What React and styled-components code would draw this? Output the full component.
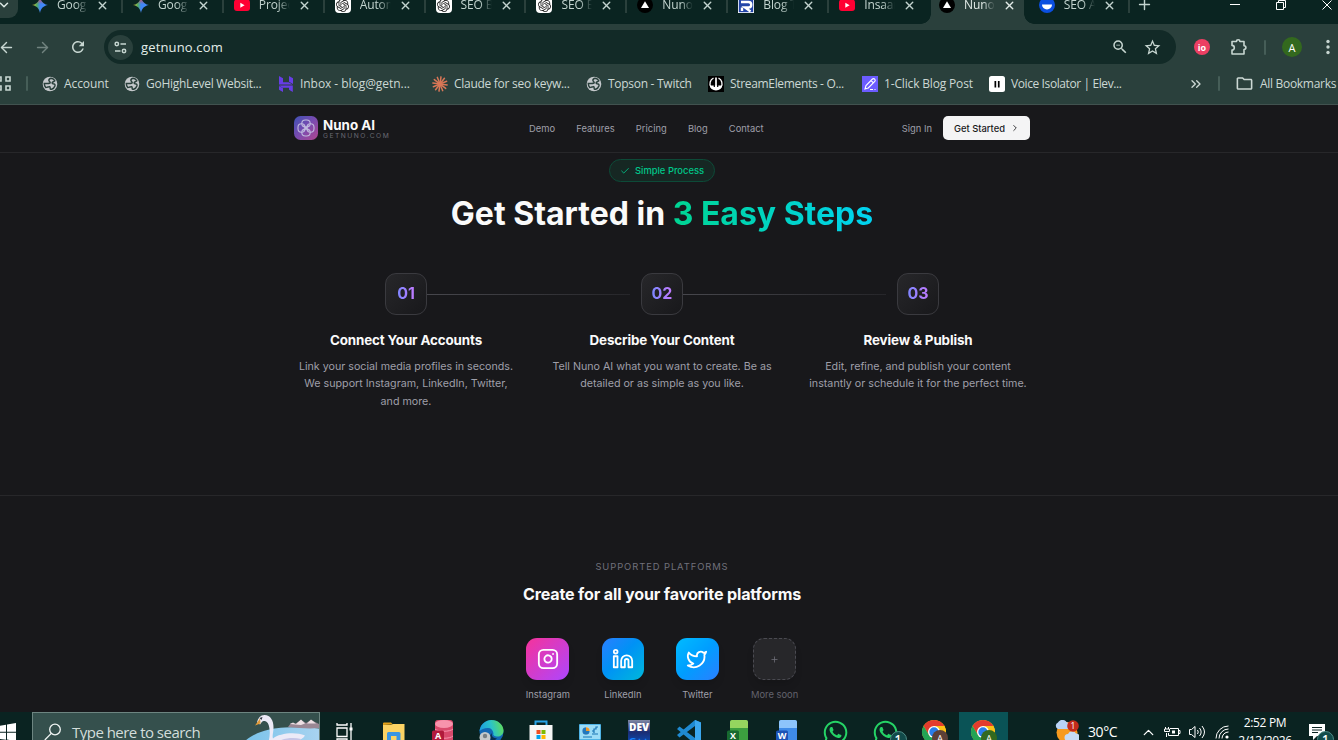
import React from 'react';
import styled, { createGlobalStyle, css } from 'styled-components';
import {
  ArrowLeft, ArrowRight, Check, ChevronDown, ChevronRight, ChevronUp, ChevronsRight,
  Instagram, Linkedin, Plus, Twitter, X
} from 'lucide-react';
import { MdOutlineFolder, MdOutlineZoomOut, MdRefresh, MdStarOutline } from 'react-icons/md';
import { SiOpenai } from 'react-icons/si';
import { FaWhatsapp } from 'react-icons/fa';

const GlobalStyle = createGlobalStyle`
  * {
    box-sizing: border-box;
  }

  body {
    margin: 0;
    background: #18181b;
    overflow: hidden;
  }

  svg {
    display: block;
    flex-shrink: 0;
  }
`;

const uiFont = "'Open Sans', 'Noto Sans', sans-serif";

const Screen = styled.div`
  display: flex;
  flex-direction: column;
  width: 1338px;
  height: 740px;
  overflow: hidden;
  font-family: Inter, sans-serif;
`;

/* ---------- browser ---------- */

const TabStrip = styled.div`
  display: flex;
  height: 24px;
  flex-shrink: 0;
  background: #0a2421;
  font-family: ${uiFont};
`;

const TabSearch = styled.div`
  flex: 0 0 18px;
  height: 18px;
  margin-right: 4px;
  border-radius: 0 0 9px 0;
  background: #2a403c;
  color: #dfe9e6;

  svg {
    margin: -2px 0 0 -3px;
  }
`;

const Tab = styled.div`
  position: relative;
  display: flex;
  align-items: center;
  flex: 0 0 100.9px;
  height: 24px;
  padding: 0 0 14px 10px;
  color: #c3d4cf;

  ${p => p.$active && css`
    flex-basis: 93px;
    margin: 0 4.7px 0 1px;
    padding-left: 8px;
    background: #2a403c;
    color: #e3ebe8;

    &::before,
    &::after {
      content: '';
      position: absolute;
      bottom: 0;
      width: 10px;
      height: 10px;
    }

    &::before {
      left: -10px;
      background: radial-gradient(circle at 0 0, transparent 9.5px, #2a403c 10px);
    }

    &::after {
      right: -10px;
      background: radial-gradient(circle at 100% 0, transparent 9.5px, #2a403c 10px);
    }
  `}
`;

const TabLabel = styled.span`
  width: 31px;
  margin: 0 8px 0 9px;
  overflow: hidden;
  white-space: nowrap;
  font-size: 12px;
  line-height: 18px;
  letter-spacing: -0.1px;
  mask-image: linear-gradient(90deg, #000 60%, transparent 100%);
`;

const TabDivider = styled.span`
  width: 2px;
  height: 16px;
  margin-left: auto;
  background: ${p => (p.$hidden ? 'transparent' : '#2a403c')};
`;

const NewTab = styled.div`
  margin: -4px 0 0 6px;
  color: #c3d4cf;
`;

const WindowButtons = styled.div`
  display: flex;
  align-items: center;
  gap: 34px;
  height: 10px;
  margin-left: auto;
  padding-right: 5px;
`;

const Toolbar = styled.div`
  display: flex;
  align-items: center;
  height: 46px;
  flex-shrink: 0;
  background: #2a403c;
  color: #c7d6d1;
  font-family: ${uiFont};
`;

const ToolSlot = styled.div`
  display: flex;
  align-items: center;
  justify-content: center;
  flex: 0 0 ${p => p.$width || 36}px;
  margin-left: ${p => p.$shift || 0}px;
  opacity: ${p => (p.$disabled ? 0.45 : 1)};
`;

const AddressBar = styled.div`
  display: flex;
  align-items: center;
  flex: 0 0 1072px;
  height: 34px;
  margin-left: 8px;
  padding: 0 8px 0 4px;
  border-radius: 17px;
  background: #122a27;
`;

const SiteInfo = styled.div`
  display: grid;
  place-items: center;
  width: 25px;
  height: 25px;
  border-radius: 50%;
  background: #2a403c;
`;

const Url = styled.span`
  flex: 1;
  margin-left: 8px;
  color: #e4eeea;
  font-size: 13px;
  letter-spacing: 0.15px;
`;

const Badge = styled.span`
  display: grid;
  place-items: center;
  width: ${p => p.$size}px;
  height: ${p => p.$size}px;
  border-radius: 50%;
  background: ${p => p.$color};
  color: #fff;
  font-size: ${p => p.$font}px;
  font-weight: ${p => p.$weight || 400};
  line-height: 1;
`;

const VerticalRule = styled.span`
  width: 2px;
  height: 15px;
  border-radius: 1px;
  background: #465e58;
`;

const BookmarksBar = styled.div`
  display: flex;
  align-items: center;
  height: 35px;
  flex-shrink: 0;
  padding-bottom: 7px;
  border-bottom: 1px solid #41524f;
  background: #2a403c;
  color: #ccd8d4;
  font-family: ${uiFont};
`;

const AppsButton = styled.div`
  width: 26px;
  color: #c7d6d1;

  svg {
    margin-left: -4px;
  }
`;

const BookmarkList = styled.div`
  display: flex;
  margin-left: 14px;
`;

const Bookmark = styled.div`
  display: flex;
  align-items: center;
  gap: 6px;
  width: ${p => p.$width}px;
  font-size: 12px;
  letter-spacing: ${p => p.$tracking ?? -0.28}px;
  white-space: nowrap;
`;

const AllBookmarks = styled(Bookmark)`
  margin-left: 15px;
`;

/* ---------- site ---------- */

const Page = styled.main`
  width: 1338px;
  height: 607px;
  flex-shrink: 0;
  background: #18181b;
  color: #fafafa;
`;

const Nav = styled.nav`
  display: flex;
  align-items: center;
  height: 48px;
  padding: 0 308px 1px 294px;
  border-bottom: 1px solid #27272a;
  font-size: 9.38px;
  color: #9f9fa9;
`;

const Brand = styled.div`
  display: flex;
  align-items: center;
  gap: 5px;
  width: 235px;
`;

const BrandName = styled.div`
  padding-top: 2px;
  color: #fafafa;
  font-size: 13.4px;
  font-weight: 700;
  line-height: 14px;
`;

const BrandHost = styled.div`
  margin-top: 1px;
  color: #6a6a74;
  font-size: 6.7px;
  line-height: 7px;
  letter-spacing: 1.48px;
`;

const NavLinks = styled.div`
  display: flex;
  flex: 1;
  gap: 21.2px;
`;

const GetStarted = styled.button`
  display: flex;
  align-items: center;
  gap: 5px;
  width: 87px;
  height: 24px;
  margin-left: 11px;
  padding: 0 0 0 11px;
  border: 0;
  border-radius: 5px;
  background: #f4f4f5;
  color: #18181b;
  font: 500 9.4px Inter, sans-serif;
`;

const StepsSection = styled.section`
  display: flex;
  flex-direction: column;
  align-items: center;
  height: 343px;
  padding: 6px 14px 0 0;
  border-bottom: 1px solid #27272a;
`;

const Pill = styled.div`
  display: flex;
  align-items: center;
  gap: 5px;
  height: 23px;
  padding: 0 10px;
  border: 1px solid #0d4a38;
  border-radius: 12px;
  background: #162723;
  color: #00c78a;
  font-size: 9.4px;
  font-weight: 500;
`;

const Heading = styled.h1`
  margin: 12px 0 0;
  font-size: 32px;
  font-weight: 700;
  line-height: 40px;
  white-space: nowrap;

  span {
    background: linear-gradient(90deg, #00d492, #00d3f2);
    background-clip: text;
    color: transparent;
  }
`;

const StepGrid = styled.div`
  display: grid;
  grid-template-columns: repeat(3, 224px);
  gap: 32px;
  margin-top: 39px;
`;

const Step = styled.article`
  position: relative;
  display: flex;
  flex-direction: column;
  align-items: center;
  text-align: center;
`;

const Connector = styled.span`
  position: absolute;
  top: 21px;
  left: 133px;
  width: 203px;
  height: 1px;
  background: linear-gradient(90deg, #47474d, #26262a);
`;

const StepNumber = styled.div`
  display: grid;
  place-items: center;
  width: 42px;
  height: 42px;
  border: 1px solid #3a3a3f;
  border-radius: 11px;
  background: linear-gradient(135deg, #27272a, #18181b);
  font-size: 16px;
  font-weight: 700;

  span {
    margin-top: -2px;
    background: linear-gradient(90deg, #7c86ff, #c27aff);
    background-clip: text;
    color: transparent;
  }
`;

const StepTitle = styled.h3`
  margin: 16px 0 8px;
  font-size: 13.4px;
  font-weight: 700;
  line-height: 19px;
  letter-spacing: -0.01em;
`;

const StepText = styled.p`
  margin: 0;
  color: #9f9fa9;
  font-size: 10.7px;
  line-height: 17.4px;
  white-space: pre-line;
`;

const PlatformSection = styled.section`
  display: flex;
  flex-direction: column;
  align-items: center;
  padding: 64px 14px 0 0;
`;

const Eyebrow = styled.p`
  margin: 0;
  color: #71717b;
  font-size: 9.4px;
  line-height: 13px;
  letter-spacing: 0.93px;
`;

const PlatformHeading = styled.h2`
  margin: 11px 0 0;
  font-size: 16.1px;
  font-weight: 700;
  line-height: 21px;
  letter-spacing: -0.01em;
`;

const PlatformList = styled.div`
  display: flex;
  gap: 32px;
  margin-top: 33px;
`;

const Platform = styled.div`
  display: flex;
  flex-direction: column;
  align-items: center;
  gap: 8px;
  color: ${p => (p.$muted ? '#62626c' : '#9f9fa9')};
  font-size: 9.4px;
  line-height: 13px;
`;

const PlatformIcon = styled.div`
  display: grid;
  place-items: center;
  width: ${p => p.$width || 43}px;
  height: 42px;
  border-radius: 11px;
  background: ${p => p.$fill};
  border: ${p => (p.$dashed ? '1px dashed #4a4a51' : '0')};
  color: ${p => (p.$dashed ? '#71717b' : '#fff')};
  box-shadow: 0 6px 10px -3px rgba(0, 0, 0, 0.18);
`;

/* ---------- taskbar ---------- */

const Taskbar = styled.footer`
  display: flex;
  align-items: center;
  height: 40px;
  flex-shrink: 0;
  background: #0a2321;
  color: #fff;
  font-family: ${uiFont};
`;

const StartButton = styled.div`
  width: 32px;

  svg {
    margin-left: -2px;
  }
`;

const SearchBox = styled.div`
  display: flex;
  align-items: center;
  width: 288px;
  height: 40px;
  padding-left: 11px;
  border: 1px solid #6d8581;
  background: #35504d;
  color: #d3dddb;
  font-size: 15px;
  letter-spacing: -0.52px;

  span {
    margin-left: 10px;
    white-space: nowrap;
  }

  svg:last-child {
    margin-left: auto;
  }
`;

const TaskItem = styled.div`
  position: relative;
  display: grid;
  place-items: center;
  flex: 0 0 49.15px;
  height: 40px;
  background: ${p => (p.$active ? '#0a5356' : 'transparent')};
`;

const CountBadge = styled.span`
  position: absolute;
  left: ${p => p.$left}px;
  top: 19px;
  display: grid;
  place-items: center;
  width: 17px;
  height: 17px;
  border: 1px solid #4f8b86;
  border-radius: 50%;
  background: #124b4a;
  font-size: 12px;
  font-weight: 600;
  line-height: 1;
`;

const Tray = styled.div`
  display: flex;
  align-items: center;
  margin-left: auto;
`;

const Temperature = styled.span`
  width: 48px;
  margin: -1px 0 0 9px;
  font-size: 14px;
  letter-spacing: -0.4px;
`;

const TraySlot = styled.div`
  display: grid;
  place-items: center;
  width: ${p => p.$width || 25}px;
`;

const Clock = styled.div`
  width: 62px;
  height: 40px;
  padding-top: 2px;
  font-size: 12px;
  line-height: 18px;
  letter-spacing: -0.35px;
  text-align: center;
`;

const Notifications = styled(TaskItem)`
  flex-basis: 42px;
`;

/* ---------- drawings ---------- */

const starPath = 'M8 0c.7 4.500 3.500 7.300 8 8-4.500.7-7.300 3.500-8 8-.7-4.500-3.500-7.300-8-8 4.500-.7 7.300-3.500 8-8z';

const Gemini = () => (
  <svg width="16" height="16" viewBox="0 0 16 16">
    <defs>
      <linearGradient id="gemA" x1="0" y1="0" x2="1" y2="0">
        <stop offset="0" stopColor="#f6c12c" />
        <stop offset="0.3" stopColor="#4fae62" />
        <stop offset="0.5" stopColor="#4285f4" />
        <stop offset="1" stopColor="#3f8cff" />
      </linearGradient>
      <linearGradient id="gemB" x1="0" y1="0" x2="0" y2="1">
        <stop offset="0" stopColor="#ea4335" />
        <stop offset="0.45" stopColor="#ea4335" stopOpacity="0" />
      </linearGradient>
    </defs>
    <path fill="url(#gemA)" d={starPath} />
    <path fill="url(#gemB)" d={starPath} />
  </svg>
);

const YouTube = () => (
  <svg width="16" height="16" viewBox="0 0 16 16">
    <rect y="2.500" width="16" height="11.500" rx="3" fill="#ff0033" />
    <path d="M6.300 5.700v5l4.300-2.500z" fill="#fff" />
  </svg>
);

const GptTile = styled.div`
  display: grid;
  place-items: center;
  width: 16px;
  height: 16px;
  border-radius: 4px;
  background: #fff;
  color: #222;
`;

const ChatGpt = () => (
  <GptTile><SiOpenai size={13} /></GptTile>
);

const NunoFavicon = () => (
  <svg width="16" height="16" viewBox="0 0 16 16">
    <circle cx="8" cy="8" r="8" fill="#000" />
    <path d="M8 4.200l4 6.800H4z" fill="#fff" />
  </svg>
);

const BlogFavicon = () => (
  <svg width="16" height="16" viewBox="0 0 16 16">
    <rect width="16" height="16" fill="#fff" />
    <rect x=".8" y=".8" width="14.400" height="14.400" fill="#2345a8" />
    <path d="M3 5h7.500a2.600 2.600 0 0 1 0 5.500H7l5.500 4M4 14v-3.500" fill="none" stroke="#fff" strokeWidth="2.400" />
  </svg>
);

const SeoFavicon = () => (
  <svg width="16" height="16" viewBox="0 0 16 16">
    <circle cx="8" cy="8" r="8" fill="#0b4fe0" />
    <path d="M3 7.500h10a5 5 0 0 1-10 0z" fill="#fff" />
  </svg>
);

const Hostinger = () => (
  <svg width="16" height="16" viewBox="0 0 16 16" fill="#673de6">
    <path d="M1 0l4 2.300v3.900h5.600l4 2.300H1zM11 0l4 2.300v5.700l-4-2.300zM1 9.500h13.800V16L11 13.800v-2H4.500zM1 10l4 2.200V16l-4-2.200z" />
  </svg>
);

const Claude = () => (
  <svg width="16" height="16" viewBox="0 0 16 16" stroke="#d97757" strokeWidth="1.500" strokeLinecap="round">
    {[0, 30, 60, 90, 120, 150].map(a => (
      <path key={a} d="M8 .8v14.400" transform={`rotate(${a + 8} 8 8)`} />
    ))}
  </svg>
);

const StreamElements = () => (
  <svg width="16" height="16" viewBox="0 0 16 16">
    <rect width="16" height="16" fill="#000" />
    <path d="M5.500 2.200A6 6 0 0 0 3 11M10.500 2.200A6 6 0 0 1 13 11" fill="none" stroke="#fff" strokeWidth="1.300" />
    <path d="M1.800 9.500h12.400a6.200 5 0 0 1-12.400 0z" fill="#fff" />
    <path d="M6.300 6v5M9.700 6v5" stroke="#000" strokeWidth="1.200" />
    <path d="M8 1.500v11" stroke="#fff" strokeWidth="1.700" />
  </svg>
);

const BlogPost = () => (
  <svg width="16" height="16" viewBox="0 0 16 16" fill="none" stroke="#fff" strokeWidth="1.100">
    <rect width="16" height="16" fill="#6c5cff" stroke="none" />
    <path d="M3 13l1-3.500 6.500-6.500a1.400 1.400 0 0 1 2 0l.3.300a1.400 1.400 0 0 1 0 2L6.300 12zM9 4.500l2.400 2.400M8 13.500h3M12.500 13.500h1" />
  </svg>
);

const ElevenLabs = () => (
  <svg width="16" height="16" viewBox="0 0 16 16">
    <rect width="16" height="16" rx="2.500" fill="#fff" />
    <path d="M5.500 5h1.700v6.500H5.500zM8.900 5h1.700v6.500H8.900z" fill="#000" />
  </svg>
);

const Globe = () => (
  <svg width="16" height="16" viewBox="0 0 16 16">
    <circle cx="8" cy="8" r="7.300" fill="#c4c8cb" />
    <path d="M9.500 2.300c-1.800.2-2.700 1-2.600 2.200.1 1 1.200 1 1.300 2 .1.900-1.200 1-2.700 1H2.300c0 1.800.6 3 1.500 4 1-.2 2.600-.2 3.200-1M9.500 2.300c1.500.4 2.600 1.300 3.300 2.600-.7 1-2.200.7-2.600 1.700-.3 1 .8 1.300 2 1.500.8.200.9 1 .7 1.800-.5 1.500-1.700 2.800-3.300 3.400-1 .2-1.600-.3-1.400-1.200.2-1-.2-1.400-1.200-1.600" fill="none" stroke="#2a403c" strokeWidth="1.500" />
  </svg>
);

const AppsGrid = () => (
  <svg width="15" height="15" viewBox="0 0 15 15" fill="none" stroke="currentColor" strokeWidth="1.600">
    <path d="M1 1h4v4H1zM10 1h4v4h-4zM1 10h4v4H1zM10 10h4v4h-4z" />
  </svg>
);

const Tune = () => (
  <svg width="13" height="13" viewBox="0 0 13 13" fill="none" stroke="#c7d6d1" strokeWidth="1.500">
    <circle cx="2.800" cy="3" r="1.700" />
    <path d="M6.500 3H12M1 10h5.500" />
    <circle cx="10" cy="10" r="1.700" />
  </svg>
);

const Puzzle = () => (
  <svg width="18" height="18" viewBox="0 0 18 18" fill="none" stroke="currentColor" strokeWidth="1.600" strokeLinejoin="round">
    <path d="M2 3.500h4.500a1.700 1.700 0 0 1 3.400 0H14v4.200a1.900 1.900 0 0 1 0 3.800V16H2v-4a2.300 2.300 0 0 0 0-4.600z" />
  </svg>
);

const Kebab = () => (
  <svg width="4" height="16" viewBox="0 0 4 16" fill="currentColor">
    <circle cx="2" cy="2.500" r="1.700" />
    <circle cx="2" cy="8" r="1.700" />
    <circle cx="2" cy="13.500" r="1.700" />
  </svg>
);

const Minimize = () => (
  <svg width="12" height="12" viewBox="0 0 12 12" stroke="#fff"><path d="M1 5.500h10" /></svg>
);

const Restore = () => (
  <svg width="12" height="12" viewBox="0 0 12 12" fill="none" stroke="#fff">
    <path d="M1.500 3.500h7v7h-7zM3.500 3.500v-2h7v7h-2" />
  </svg>
);

const CloseWindow = () => (
  <svg width="12" height="12" viewBox="0 0 12 12" stroke="#fff"><path d="M1.500 1.500l9 9M10.500 1.500l-9 9" /></svg>
);

const NunoLogo = () => (
  <svg width="24" height="24" viewBox="0 0 24 24">
    <defs>
      <linearGradient id="nuno" x1="0" y1="0" x2="1" y2="1">
        <stop offset="0" stopColor="#3f51b5" />
        <stop offset="0.5" stopColor="#7a4bb0" />
        <stop offset="1" stopColor="#b0458e" />
      </linearGradient>
    </defs>
    <rect width="24" height="24" rx="6.500" fill="url(#nuno)" />
    <g fill="none" stroke="#c0badf" strokeWidth="1.100">
      <rect x="7.800" y="4" width="8.400" height="7" rx="3.500" />
      <rect x="7.800" y="13" width="8.400" height="7" rx="3.500" />
      <rect x="4" y="7.800" width="7" height="8.400" rx="3.500" />
      <rect x="13" y="7.800" width="7" height="8.400" rx="3.500" />
      <path d="M9.500 9.500l5 5M14.500 9.500l-5 5" strokeWidth="1.300" />
    </g>
  </svg>
);

const WindowsLogo = () => (
  <svg width="18" height="18" viewBox="0 0 18 18" fill="#fff">
    <path d="M0 3l8-1.200v7H0zM9 1.600L18 0v8.800H9zM0 9.800h8v7L0 15.600zM9 9.800h9V18l-9-1.400z" />
  </svg>
);

const SearchGlass = () => (
  <svg width="18" height="18" viewBox="0 0 18 18" fill="none" stroke="#f1f5f4" strokeWidth="1.300">
    <circle cx="11" cy="6.500" r="5.300" />
    <path d="M7.300 10.400L.8 17" />
  </svg>
);

const Swan = () => (
  <svg width="74" height="38" viewBox="0 0 74 38">
    <defs>
      <linearGradient id="lake" x1="0" y1="0" x2="1" y2="0">
        <stop offset="0" stopColor="#79c3ea" />
        <stop offset="1" stopColor="#a8d3f0" />
      </linearGradient>
    </defs>
    <path d="M0 28C9 20 24 15 40 14.500c14-.5 26 0 34 1V38H0z" fill="url(#lake)" />
    <path d="M43 14l3-4 4 1 6-4 5 3 5-3 8 4v4c-10 1-20 0-31-1z" fill="#9a8794" />
    <path d="M45 11l3-1.500 3 1.500 5-4.500 4 4-4 1.500zM62 10.500l4-4 5 4z" fill="#eddfe4" />
    <path d="M23 38c-2-6 3-12 1.500-22C24 11 22.500 8.500 19.500 8c-3 0-3 2-4.500 3.500l-3-2C13 5 15.500 2 19.500 2c6 0 9 5.500 9 12.500 0 5-1.500 8-.5 11 6-5 22-7 32-3-2 3-4 4-7 5 2 3-1 9-5 10.500z" fill="#eceaf7" />
    <path d="M30 30c8-5 18-6 26-4-4 5-12 9-26 7z" fill="#c6c5e6" />
    <path d="M15 5.500L10 12.500l5.500-2z" fill="#e09a3a" />
    <path d="M14.500 5l3-1-1 3z" fill="#29303d" />
  </svg>
);

const TaskView = () => (
  <svg width="18" height="20" viewBox="0 0 18 20" fill="none" stroke="#fff" strokeWidth="1.300">
    <path d="M1 6h10v8.500H1zM1 1v2h10V1M1 19v-2h10v2M15 1v18" />
    <path d="M13.500 5.500h3v3h-3z" fill="#fff" stroke="none" />
  </svg>
);

const Explorer = () => (
  <svg width="22" height="22" viewBox="0 0 22 22">
    <path d="M0 4V2.500a1 1 0 0 1 1-1h7l2 2z" fill="#e3a21a" />
    <path d="M0 4h8l2-1h11.500v17H0z" fill="#fcd364" />
    <path d="M4 21v-8.500A1.500 1.500 0 0 1 5.500 11h10.500a1.500 1.500 0 0 1 1.500 1.500V21h-4v-6H8v6z" fill="#3a95e4" />
  </svg>
);

const AppTile = ({ letter, back, light, tile, round }) => (
  <svg width="24" height="24" viewBox="0 0 24 24">
    <rect x="4" y="0" width="18" height="24" rx="3" fill={back} />
    {round
      ? <ellipse cx="13" cy="4" rx="9" ry="4" fill={light} />
      : <path d="M4 2a2 2 0 0 1 2-2h14a2 2 0 0 1 2 2v6H4z" fill={light} />}
    {round && <path d="M4 9c3 3 15 3 18 0M4 16c3 3 15 3 18 0" fill="none" stroke={light} />}
    <rect x="1" y="10.500" width="12" height="12" rx="1.500" fill={tile} />
    <text x="7" y="19" textAnchor="middle" fontFamily="Open Sans, sans-serif" fontWeight="700" fontSize="9" fill="#fff">{letter}</text>
  </svg>
);

const Edge = () => (
  <svg width="25" height="24" viewBox="0 0 25 24">
    <defs>
      <linearGradient id="edge" x1="0" y1="0.5" x2="1" y2="0.3">
        <stop offset="0" stopColor="#1b9de0" />
        <stop offset="0.5" stopColor="#2bc3c8" />
        <stop offset="1" stopColor="#62dd55" />
      </linearGradient>
    </defs>
    <circle cx="12.500" cy="12" r="12" fill="#1267b4" />
    <path d="M.5 11C1.500 4 7 0 12.500 0 19 0 24.500 5 24.500 10.500c0 4-3 6-6 6-3 0-5-1.500-4-3C14 10 12 8 9 8c-4 0-7 1.500-8.500 3z" fill="url(#edge)" />
    <path d="M13 13c-1 3 1 5 5 5.500l-4 3-5-4z" fill="#0a2f4f" />
    <circle cx="6" cy="17.500" r="5.500" fill="#c4c9cc" />
    <circle cx="6" cy="16" r="2.200" fill="#787f84" />
  </svg>
);

const Store = () => (
  <svg width="24" height="24" viewBox="0 0 24 24">
    <path d="M6.500 6V1.500h11V6" fill="none" stroke="#27a3e8" strokeWidth="2" />
    <path d="M.5 5h23v17a2 2 0 0 1-2 2h-19a2 2 0 0 1-2-2z" fill="#f6f6f6" />
    <path d="M7.500 10h4v4h-4z" fill="#f25022" />
    <path d="M12.500 10h4v4h-4z" fill="#7fba00" />
    <path d="M7.500 15h4v4h-4z" fill="#00a4ef" />
    <path d="M12.500 15h4v4h-4z" fill="#ffb900" />
  </svg>
);

const ControlPanel = () => (
  <svg width="22" height="16" viewBox="0 0 22 16">
    <rect width="22" height="16" rx="1" fill="#4fb3e6" />
    <rect x="1" y="1" width="20" height="14" fill="#9bdcf7" />
    <circle cx="7" cy="7" r="3.700" fill="#f8fbfd" />
    <path d="M7 7V3.300A3.700 3.700 0 0 1 10.700 7z" fill="#f09a2c" />
    <path d="M7 7h3.700A3.700 3.700 0 1 1 7 3.300z" fill="#2178be" />
    <path d="M13 7h2V5h2V3h2M13 10h6M15 7v2M4 13h9" stroke="#1a74b4" strokeWidth="1.200" fill="none" />
  </svg>
);

const DevCpp = () => (
  <svg width="22" height="24" viewBox="0 0 22 24">
    <defs>
      <linearGradient id="dev" x1="0" y1="0" x2="0" y2="1">
        <stop offset="0" stopColor="#8088a3" />
        <stop offset="0.5" stopColor="#1b2c73" />
        <stop offset="1" stopColor="#0b4db5" />
      </linearGradient>
    </defs>
    <rect width="22" height="24" fill="url(#dev)" />
    <text x="1" y="10.800" textLength="20" lengthAdjust="spacingAndGlyphs" fontFamily="Open Sans, sans-serif" fontWeight="800" fontSize="11" fill="#fff">DEV</text>
    <text x="1" y="23.500" textLength="20" lengthAdjust="spacingAndGlyphs" fontFamily="Open Sans, sans-serif" fontWeight="700" fontSize="9" fill="#1583ff">C++</text>
  </svg>
);

const VsCode = () => (
  <svg width="24" height="24" viewBox="0 0 24 24">
    <path d="M18 0l6 2.500v19L18 24 0 9l2.500-2.500L18 18V6L2.500 17.500 0 15z" fill="#1f8ad2" />
    <path d="M18 0l6 2.500v19L18 24z" fill="#3ba7ee" />
  </svg>
);

const Chrome = ({ profile }) => (
  <svg width="24" height="24" viewBox="0 0 24 24" overflow="visible">
    <circle cx="12" cy="12" r="12" fill="#fbc116" />
    <path d="M1.600 6A12 12 0 0 1 22.400 6L12 7 7 15z" fill="#e33b2e" />
    <path d="M22.400 6H12v4l6 5-5 9A12 12 0 0 0 22.400 6z" fill="#fbc116" />
    <path d="M1.600 6A12 12 0 0 0 12 24l4-7-9-2z" fill="#23a455" />
    <circle cx="12" cy="12" r="6" fill="#fff" />
    <circle cx="12" cy="12" r="4.700" fill="#2a7de9" />
    <circle cx="18" cy="18" r="8" fill={profile} />
    <text x="18" y="21.500" textAnchor="middle" fontFamily="Open Sans, sans-serif" fontSize="9.500" fill="#fff">A</text>
  </svg>
);

const Weather = () => (
  <svg width="24" height="24" viewBox="0 0 24 24">
    <circle cx="12" cy="12.500" r="10.500" fill="#f79a1e" />
    <path d="M3 9a3.500 3.500 0 0 1 0-6.500A5 5 0 0 1 11.500 2 4 4 0 0 1 13 9z" fill="#b9d3f5" />
    <path d="M13 21a3.500 3.500 0 0 1 0-7 4.500 4.500 0 0 1 8-.5A4 4 0 0 1 23 21z" fill="#c5dbf7" />
    <circle cx="18" cy="6" r="5.800" fill="#c42b1c" />
    <text x="18" y="9" textAnchor="middle" fontFamily="Open Sans, sans-serif" fontSize="8.500" fill="#fff">1</text>
  </svg>
);

const Battery = () => (
  <svg width="17" height="12" viewBox="0 0 17 12" fill="none" stroke="#fff">
    <path d="M6 2.500h8.500v7H4.500V7M14.500 4.500h1.500v3h-1.500M2.500 7v4M1.500 1v2M4.500 1v2M.5 3h5v2.500h-5z" />
    <path d="M8 4.500h3v3H8z" fill="#fff" stroke="none" />
  </svg>
);

const Volume = () => (
  <svg width="17" height="14" viewBox="0 0 17 14" fill="none" stroke="#fff">
    <path d="M.5 4.500h2L6 1.500v11L2.500 9.500h-2zM8.500 5q1.500 2 0 4M10.500 3q3.300 4 0 8M13 1q5 6 0 12" />
  </svg>
);

const Wifi = () => (
  <svg width="14" height="14" viewBox="0 0 14 14" fill="none" stroke="#fff">
    <path d="M1 13.500A12.500 12.500 0 0 1 13.500 1M4 13.500A9.500 9.500 0 0 1 13.500 4M7 13.500A6.500 6.500 0 0 1 13.500 7" />
    <circle cx="12" cy="12" r="1.600" fill="#fff" stroke="none" />
  </svg>
);

const Message = () => (
  <svg width="16" height="16" viewBox="0 0 16 16">
    <path d="M0 0h16v12H8l-4 4v-4H0z" fill="#fff" />
    <path d="M3 3.500h10M3 6h10M3 8.500h6" stroke="#0a2321" />
  </svg>
);

/* ---------- data ---------- */

const tabs = [
  { label: 'Goog', Icon: Gemini },
  { label: 'Goog', Icon: Gemini },
  { label: 'Projec', Icon: YouTube },
  { label: 'Autom', Icon: ChatGpt },
  { label: 'SEO B', Icon: ChatGpt },
  { label: 'SEO B', Icon: ChatGpt },
  { label: 'Nuno', Icon: NunoFavicon },
  { label: 'Blog T', Icon: BlogFavicon },
  { label: 'Insaan', Icon: YouTube },
  { label: 'Nuno', Icon: NunoFavicon, active: true },
  { label: 'SEO A', Icon: SeoFavicon }
];

const bookmarks = [
  { label: 'Account', Icon: Globe, width: 82, tracking: -0.1 },
  { label: 'GoHighLevel Websit...', Icon: Globe, width: 154 },
  { label: 'Inbox - blog@getn...', Icon: Hostinger, width: 154, tracking: -0.05 },
  { label: 'Claude for seo keyw...', Icon: Claude, width: 154 },
  { label: 'Topson - Twitch', Icon: Globe, width: 122 },
  { label: 'StreamElements - O...', Icon: StreamElements, width: 154, tracking: -0.33 },
  { label: '1-Click Blog Post', Icon: BlogPost, width: 127, tracking: -0.16 },
  { label: 'Voice Isolator | Elev...', Icon: ElevenLabs, width: 150, tracking: -0.4 }
];

const steps = [
  {
    number: '01',
    title: 'Connect Your Accounts',
    text: 'Link your social media profiles in seconds.\nWe support Instagram, LinkedIn, Twitter,\nand more.'
  },
  {
    number: '02',
    title: 'Describe Your Content',
    text: 'Tell Nuno AI what you want to create. Be as\ndetailed or as simple as you like.'
  },
  {
    number: '03',
    title: 'Review & Publish',
    text: 'Edit, refine, and publish your content\ninstantly or schedule it for the perfect time.'
  }
];

const platforms = [
  { name: 'Instagram', Icon: Instagram, fill: 'linear-gradient(135deg, #f6339a, #ad46ff)' },
  { name: 'LinkedIn', Icon: Linkedin, width: 42, fill: 'linear-gradient(135deg, #2b7fff, #0092f5 45%, #00b8db)' },
  { name: 'Twitter', Icon: Twitter, fill: 'linear-gradient(135deg, #00bcff, #009dff 50%, #2b7fff)' }
];

const Browser = () => (
  <>
    <TabStrip>
      <TabSearch><ChevronDown size={14} strokeWidth={2.5} /></TabSearch>
      {tabs.map(({ label, Icon, active }, i) => (
        <Tab key={i} $active={active}>
          <Icon />
          <TabLabel>{label}</TabLabel>
          <X size={13} strokeWidth={2.6} />
          <TabDivider $hidden={active || tabs[i + 1]?.active} />
        </Tab>
      ))}
      <NewTab><Plus size={17} strokeWidth={2} /></NewTab>
      <WindowButtons>
        <Minimize />
        <Restore />
        <CloseWindow />
      </WindowButtons>
    </TabStrip>
    <Toolbar>
      <ToolSlot $shift={-12}><ArrowLeft size={17} /></ToolSlot>
      <ToolSlot $disabled><ArrowRight size={17} /></ToolSlot>
      <ToolSlot><MdRefresh size={18} /></ToolSlot>
      <AddressBar>
        <SiteInfo><Tune /></SiteInfo>
        <Url>getnuno.com</Url>
        <ToolSlot $width={33}><MdOutlineZoomOut size={18} /></ToolSlot>
        <ToolSlot $width={32}><MdStarOutline size={19} /></ToolSlot>
      </AddressBar>
      <ToolSlot $shift={8}>
        <Badge $size={16} $color="#ec3f63" $font={9} $weight={700}>io</Badge>
      </ToolSlot>
      <ToolSlot $width={38}><Puzzle /></ToolSlot>
      <ToolSlot $width={14}><VerticalRule /></ToolSlot>
      <ToolSlot $width={40}>
        <Badge $size={20} $color="#33691e" $font={11}>A</Badge>
      </ToolSlot>
      <ToolSlot $width={32}><Kebab /></ToolSlot>
    </Toolbar>
    <BookmarksBar>
      <AppsButton><AppsGrid /></AppsButton>
      <VerticalRule />
      <BookmarkList>
        {bookmarks.map(({ label, Icon, width, tracking }, i) => (
          <Bookmark key={i} $width={width} $tracking={tracking}>
            <Icon />
            {label}
          </Bookmark>
        ))}
      </BookmarkList>
      <ToolSlot $width={18} $shift={48}><ChevronsRight size={16} /></ToolSlot>
      <ToolSlot $width={2} $shift={13}><VerticalRule /></ToolSlot>
      <AllBookmarks $tracking={-0.3}>
        <MdOutlineFolder size={19} />
        All Bookmarks
      </AllBookmarks>
    </BookmarksBar>
  </>
);

const Site = () => (
  <Page>
    <Nav>
      <Brand>
        <NunoLogo />
        <div>
          <BrandName>Nuno AI</BrandName>
          <BrandHost>GETNUNO.COM</BrandHost>
        </div>
      </Brand>
      <NavLinks>
        <span>Demo</span>
        <span>Features</span>
        <span>Pricing</span>
        <span>Blog</span>
        <span>Contact</span>
      </NavLinks>
      <span>Sign In</span>
      <GetStarted>
        Get Started
        <ChevronRight size={10} />
      </GetStarted>
    </Nav>
    <StepsSection>
      <Pill>
        <Check size={10} strokeWidth={2} />
        Simple Process
      </Pill>
      <Heading>Get Started in <span>3 Easy Steps</span></Heading>
      <StepGrid>
        {steps.map((step, i) => (
          <Step key={step.number}>
            {i < steps.length - 1 && <Connector />}
            <StepNumber><span>{step.number}</span></StepNumber>
            <StepTitle>{step.title}</StepTitle>
            <StepText>{step.text}</StepText>
          </Step>
        ))}
      </StepGrid>
    </StepsSection>
    <PlatformSection>
      <Eyebrow>SUPPORTED PLATFORMS</Eyebrow>
      <PlatformHeading>Create for all your favorite platforms</PlatformHeading>
      <PlatformList>
        {platforms.map(({ name, Icon, fill, width }) => (
          <Platform key={name}>
            <PlatformIcon $fill={fill} $width={width}><Icon size={22} strokeWidth={2} /></PlatformIcon>
            {name}
          </Platform>
        ))}
        <Platform $muted>
          <PlatformIcon $fill="#27272a" $dashed><Plus size={9} /></PlatformIcon>
          More soon
        </Platform>
      </PlatformList>
    </PlatformSection>
  </Page>
);

const App = () => (
  <Screen>
    <GlobalStyle />
    <Browser />
    <Site />
    <Taskbar>
      <StartButton><WindowsLogo /></StartButton>
      <SearchBox>
        <SearchGlass />
        <span>Type here to search</span>
        <Swan />
      </SearchBox>
      <TaskItem><TaskView /></TaskItem>
      <TaskItem><Explorer /></TaskItem>
      <TaskItem><AppTile letter="A" back="#d94a6c" light="#f793ac" tile="#b01b3c" round /></TaskItem>
      <TaskItem><Edge /></TaskItem>
      <TaskItem><Store /></TaskItem>
      <TaskItem><ControlPanel /></TaskItem>
      <TaskItem><DevCpp /></TaskItem>
      <TaskItem><VsCode /></TaskItem>
      <TaskItem><AppTile letter="X" back="#3c9f3f" light="#95d65f" tile="#17692f" /></TaskItem>
      <TaskItem><AppTile letter="W" back="#3f8be8" light="#8dc4fb" tile="#1b52b5" /></TaskItem>
      <TaskItem><FaWhatsapp size={27} color="#25d366" /></TaskItem>
      <TaskItem>
        <FaWhatsapp size={27} color="#25d366" />
        <CountBadge $left={29}>1</CountBadge>
      </TaskItem>
      <TaskItem><Chrome profile="#5d4037" /></TaskItem>
      <TaskItem $active><Chrome profile="#33691e" /></TaskItem>
      <Tray>
        <Weather />
        <Temperature>30°C</Temperature>
        <TraySlot $width={24}><ChevronUp size={17} strokeWidth={1.8} /></TraySlot>
        <TraySlot><Battery /></TraySlot>
        <TraySlot $width={24}><Volume /></TraySlot>
        <TraySlot><Wifi /></TraySlot>
        <Clock>
          <div>2:52 PM</div>
          <div>2/13/2026</div>
        </Clock>
        <Notifications>
          <Message />
          <CountBadge $left={21}>1</CountBadge>
        </Notifications>
      </Tray>
    </Taskbar>
  </Screen>
);

export default App;
